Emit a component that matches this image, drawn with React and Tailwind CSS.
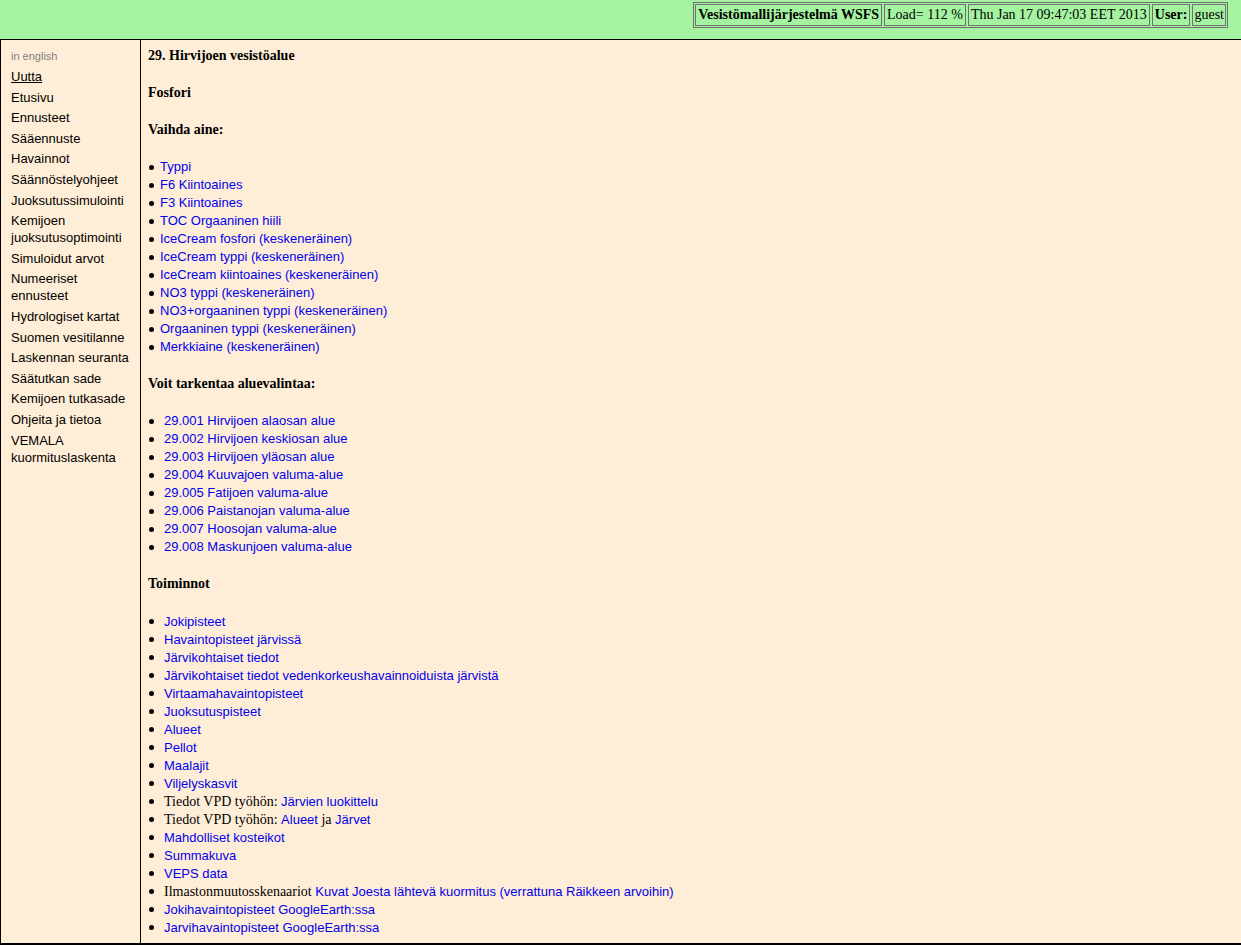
import React from 'react';

const navItems = [
  'Etusivu',
  'Ennusteet',
  'Sääennuste',
  'Havainnot',
  'Säännöstelyohjeet',
  'Juoksutussimulointi',
  'Kemijoen juoksutusoptimointi',
  'Simuloidut arvot',
  'Numeeriset ennusteet',
  'Hydrologiset kartat',
  'Suomen vesitilanne',
  'Laskennan seuranta',
  'Säätutkan sade',
  'Kemijoen tutkasade',
  'Ohjeita ja tietoa',
  'VEMALA kuormituslaskenta',
];

const aineet = [
  'Typpi',
  'F6 Kiintoaines',
  'F3 Kiintoaines',
  'TOC Orgaaninen hiili',
  'IceCream fosfori (keskeneräinen)',
  'IceCream typpi (keskeneräinen)',
  'IceCream kiintoaines (keskeneräinen)',
  'NO3 typpi (keskeneräinen)',
  'NO3+orgaaninen typpi (keskeneräinen)',
  'Orgaaninen typpi (keskeneräinen)',
  'Merkkiaine (keskeneräinen)',
];

const alueet = [
  '29.001 Hirvijoen alaosan alue',
  '29.002 Hirvijoen keskiosan alue',
  '29.003 Hirvijoen yläosan alue',
  '29.004 Kuuvajoen valuma-alue',
  '29.005 Fatijoen valuma-alue',
  '29.006 Paistanojan valuma-alue',
  '29.007 Hoosojan valuma-alue',
  '29.008 Maskunjoen valuma-alue',
];

const A = ({ children }) => <a className="text-[#0000ee] cursor-pointer">{children}</a>;
const Serif = ({ children }) => (
  <span className="font-['Liberation_Serif',serif] text-[14px]">{children}</span>
);

const toiminnot = [
  <A>Jokipisteet</A>,
  <A>Havaintopisteet järvissä</A>,
  <A>Järvikohtaiset tiedot</A>,
  <A>Järvikohtaiset tiedot vedenkorkeushavainnoiduista järvistä</A>,
  <A>Virtaamahavaintopisteet</A>,
  <A>Juoksutuspisteet</A>,
  <A>Alueet</A>,
  <A>Pellot</A>,
  <A>Maalajit</A>,
  <A>Viljelyskasvit</A>,
  <>
    <Serif>Tiedot VPD työhön: </Serif>
    <A>Järvien luokittelu</A>
  </>,
  <>
    <Serif>Tiedot VPD työhön: </Serif>
    <A>Alueet</A>
    <Serif> ja </Serif>
    <A>Järvet</A>
  </>,
  <A>Mahdolliset kosteikot</A>,
  <A>Summakuva</A>,
  <A>VEPS data</A>,
  <>
    <Serif>Ilmastonmuutosskenaariot </Serif>
    <A>Kuvat Joesta lähtevä kuormitus (verrattuna Räikkeen arvoihin)</A>
  </>,
  <A>Jokihavaintopisteet GoogleEarth:ssa</A>,
  <A>Jarvihavaintopisteet GoogleEarth:ssa</A>,
];

const Bullets = ({ items, indent }) => (
  <ul className="flex flex-col">
    {items.map((item, i) => (
      <li key={i} className="flex items-center h-[18px] whitespace-nowrap">
        <span className="w-[5px] h-[5px] rounded-full bg-black ml-[1px] shrink-0" />
        <span className={indent}>{item}</span>
      </li>
    ))}
  </ul>
);

const Heading = ({ children }) => (
  <div className="h-[18px] leading-[18px] font-['Liberation_Serif',serif] font-bold text-[14px] text-black">
    {children}
  </div>
);

export default function App() {
  return (
    <div className="w-[1241px] h-[945px] flex flex-col bg-[#ffeed7] font-['Liberation_Sans',Arial,sans-serif] text-[13px] text-black">
      {/* top bar */}
      <div className="h-[40px] bg-[#a5f3a0] border-b border-black flex justify-end items-start pr-[13px] pt-[2px] shrink-0">
        <div className="flex gap-[2px] p-[1px] border border-[#707070] font-['Liberation_Serif',serif] text-[14px] leading-[20px]">
          <div className="border border-[#707070] px-[2px] font-bold">Vesistömallijärjestelmä WSFS</div>
          <div className="border border-[#707070] px-[2px]">Load= 112 %</div>
          <div className="border border-[#707070] px-[2px]">Thu Jan 17 09:47:03 EET 2013</div>
          <div className="border border-[#707070] px-[2px] font-bold">User:</div>
          <div className="border border-[#707070] px-[1px]">guest</div>
        </div>
      </div>

      <div className="flex flex-1 border-l border-b-2 border-black min-h-0">
        {/* left nav */}
        <nav className="w-[140px] shrink-0 border-r border-black pl-[10px] pr-[8px] pt-[9px]">
          <div className="text-[11px] leading-[14px] text-[#808080]">in english</div>
          <div className="flex flex-col gap-[3.6px] mt-[5px] leading-[17px]">
            <a className="underline">Uutta</a>
            {navItems.map((t) => (
              <a key={t}>{t}</a>
            ))}
          </div>
        </nav>

        {/* main */}
        <main className="flex-1 pl-[7px] pt-[7px] flex flex-col gap-[19.05px]">
          <Heading>29. Hirvijoen vesistöalue</Heading>
          <Heading>Fosfori</Heading>
          <Heading>Vaihda aine:</Heading>
          <Bullets items={aineet.map((t) => <A key={t}>{t}</A>)} indent="ml-[6px]" />
          <Heading>Voit tarkentaa aluevalintaa:</Heading>
          <Bullets items={alueet.map((t) => <A key={t}>{t}</A>)} indent="ml-[10px]" />
          <Heading>Toiminnot</Heading>
          <Bullets items={toiminnot} indent="ml-[10px]" />
        </main>
      </div>
    </div>
  );
}
